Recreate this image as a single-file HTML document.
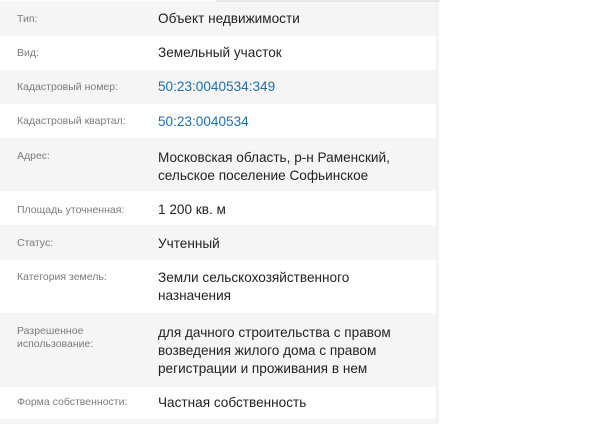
<!DOCTYPE html>
<html><head><meta charset="utf-8"><style>
body{margin:0;width:600px;height:421px;background:#fff;overflow:hidden;font-family:"Segoe UI","Liberation Sans","DejaVu Sans",sans-serif;position:relative}
.top{position:absolute;left:216px;top:0;width:224px;height:2px;background:#ececec}
.panel{position:absolute;left:0;top:2px;width:436px;box-shadow:2px 0 3px rgba(0,0,0,0.08)}
.r{position:relative;display:flex}
.r.g{background:#f5f5f5}
.l{position:absolute;left:17px;font-size:10.5px;color:#7a7a7a;line-height:13px}
.v{position:absolute;left:158px;font-size:13.6px;color:#222;line-height:18px}
a{color:#1f6ea8;text-decoration:none}
</style></head><body>
<div class="top"></div>
<div class="panel">
<div class="r g" style="height:34px"><div class="l" style="top:11px">Тип:</div><div class="v" style="top:8px">Объект недвижимости</div></div>
<div class="r" style="height:34px"><div class="l" style="top:11px">Вид:</div><div class="v" style="top:8px">Земельный участок</div></div>
<div class="r g" style="height:34px"><div class="l" style="top:11px">Кадастровый номер:</div><div class="v" style="top:8px"><a>50:23:0040534:349</a></div></div>
<div class="r" style="height:34px"><div class="l" style="top:11px">Кадастровый квартал:</div><div class="v" style="top:9px"><a>50:23:0040534</a></div></div>
<div class="r g" style="height:53px"><div class="l" style="top:12px">Адрес:</div><div class="v" style="top:11px">Московская область, р-н Раменский,<br>сельское поселение Софьинское</div></div>
<div class="r" style="height:34px"><div class="l" style="top:13px">Площадь уточненная:</div><div class="v" style="top:10px">1 200 кв. м</div></div>
<div class="r g" style="height:35px"><div class="l" style="top:12px">Статус:</div><div class="v" style="top:10px">Учтенный</div></div>
<div class="r" style="height:53px"><div class="l" style="top:11px">Категория земель:</div><div class="v" style="top:9px">Земли сельскохозяйственного<br>назначения</div></div>
<div class="r g" style="height:74px"><div class="l" style="top:12px">Разрешенное<br>использование:</div><div class="v" style="top:11px">для дачного строительства с правом<br>возведения жилого дома с правом<br>регистрации и проживания в нем</div></div>
<div class="r" style="height:32px"><div class="l" style="top:9px">Форма собственности:</div><div class="v" style="top:7px">Частная собственность</div></div>
<div class="r g" style="height:5px"></div>
</div>
</body></html>
